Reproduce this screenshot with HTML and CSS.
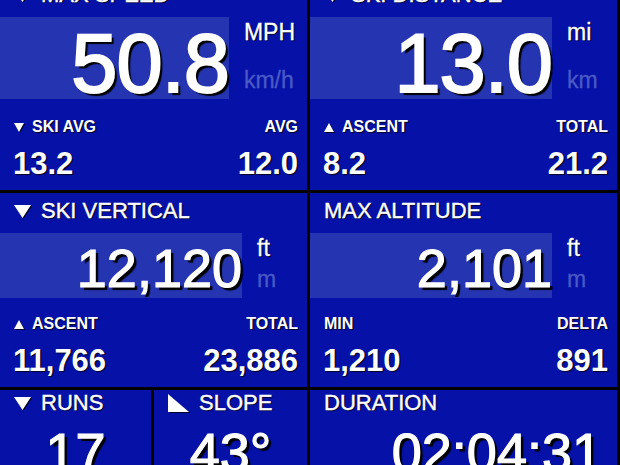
FILE: index.html
```html
<!DOCTYPE html>
<html lang="en">
  <head>
    <meta charset="UTF-8" />
    <meta name="viewport" content="width=device-width, initial-scale=1.0" />
    <title>Ski Stats</title>
    <link rel="stylesheet" href="styles.css">
  </head>
  <body>
    <div class="dash">
      <div class="panel panel-big">
        <div class="title">
          <svg class="tri" viewBox="0 0 17 13"><path d="M0 0H17L8.5 13Z" /></svg>
          <span>MAX SPEED</span>
        </div>
        <div class="hero">
          <div class="hero-value">50.8</div>
          <div class="units">
            <span>MPH</span>
            <span class="dim">km/h</span>
          </div>
        </div>
        <div class="sub-labels">
          <span><svg class="tri-sm" viewBox="0 0 10 9"><path d="M0 0H10L5 9Z" /></svg>SKI AVG</span>
          <span>AVG</span>
        </div>
        <div class="sub-values">
          <span>13.2</span>
          <span>12.0</span>
        </div>
      </div>

      <div class="panel panel-big">
        <div class="title">
          <svg class="tri" viewBox="0 0 17 13"><path d="M0 0H17L8.5 13Z" /></svg>
          <span>SKI DISTANCE</span>
        </div>
        <div class="hero">
          <div class="hero-value">13.0</div>
          <div class="units">
            <span>mi</span>
            <span class="dim">km</span>
          </div>
        </div>
        <div class="sub-labels">
          <span><svg class="tri-sm" viewBox="0 0 10 9"><path d="M5 0L10 9H0Z" /></svg>ASCENT</span>
          <span>TOTAL</span>
        </div>
        <div class="sub-values">
          <span>8.2</span>
          <span>21.2</span>
        </div>
      </div>

      <div class="panel">
        <div class="title">
          <svg class="tri" viewBox="0 0 17 13"><path d="M0 0H17L8.5 13Z" /></svg>
          <span>SKI VERTICAL</span>
        </div>
        <div class="hero">
          <div class="hero-value">12,120</div>
          <div class="units">
            <span>ft</span>
            <span class="dim">m</span>
          </div>
        </div>
        <div class="sub-labels">
          <span><svg class="tri-sm" viewBox="0 0 10 9"><path d="M5 0L10 9H0Z" /></svg>ASCENT</span>
          <span>TOTAL</span>
        </div>
        <div class="sub-values">
          <span>11,766</span>
          <span>23,886</span>
        </div>
      </div>

      <div class="panel">
        <div class="title">
          <span>MAX ALTITUDE</span>
        </div>
        <div class="hero">
          <div class="hero-value">2,101</div>
          <div class="units">
            <span>ft</span>
            <span class="dim">m</span>
          </div>
        </div>
        <div class="sub-labels">
          <span>MIN</span>
          <span>DELTA</span>
        </div>
        <div class="sub-values">
          <span>1,210</span>
          <span>891</span>
        </div>
      </div>

      <div class="pair">
        <div class="panel panel-small">
          <div class="title">
            <svg class="tri" viewBox="0 0 17 13"><path d="M0 0H17L8.5 13Z" /></svg>
            <span>RUNS</span>
          </div>
          <div class="big-value center">17</div>
        </div>
        <div class="panel panel-small">
          <div class="title">
            <svg class="slope" viewBox="0 0 21 18"><path d="M0 0L21 18H0Z" /></svg>
            <span>SLOPE</span>
          </div>
          <div class="big-value center">43°</div>
        </div>
      </div>

      <div class="panel panel-small">
        <div class="title">
          <span>DURATION</span>
        </div>
        <div class="big-value right">02:04:31</div>
      </div>
    </div>
  </body>
</html>
```

FILE: styles.css
```css
body {
  margin: 0;
  height: 465px;
  overflow: hidden;
  background-color: #000;
  font-family: "Liberation Sans", Arial, sans-serif;
  color: #fff;
}
.dash {
  display: grid;
  grid-template-columns: 307px 307px;
  grid-template-rows: 213px 194px 120px;
  gap: 3px;
  margin-top: -23px;
}
.pair {
  display: grid;
  grid-template-columns: 151px 153px;
  gap: 3px;
}
.panel {
  background-color: #0611a8;
  display: flex;
  flex-direction: column;
  text-shadow: 1px 1px 1px rgba(0, 0, 0, 0.8);
}
.title {
  display: flex;
  align-items: center;
  gap: 10px;
  height: 26px;
  padding: 5px 14px 0;
  font-size: 22px;
  line-height: 26px;
  -webkit-text-stroke: 0.4px #fff;
}
.tri {
  width: 17px;
  height: 13px;
  fill: #fff;
  filter: drop-shadow(1px 1px 0 rgba(0, 0, 0, 0.8));
}
.tri-sm {
  width: 10px;
  height: 9px;
  margin-right: 8px;
  fill: #fff;
  filter: drop-shadow(1px 1px 0 rgba(0, 0, 0, 0.8));
}
.slope {
  width: 21px;
  height: 18px;
  fill: #fff;
  filter: drop-shadow(1px 1px 0 rgba(0, 0, 0, 0.8));
}
.hero {
  display: flex;
  height: 65px;
  margin-top: 9px;
}
.hero-value {
  flex: 1;
  background-color: #2534b0;
  text-align: right;
  box-sizing: border-box;
  padding-top: 8px;
  font-size: 54px;
  line-height: 54px;
  text-shadow: 3px 3px 1px #000;
  -webkit-text-stroke: 1.2px #fff;
}
.units {
  display: flex;
  flex-direction: column;
  justify-content: space-between;
  min-width: 38px;
  padding: 4px 12px 7px 15px;
  font-size: 23px;
  line-height: 23px;
  -webkit-text-stroke: 0.3px #fff;
}
.units .dim {
  color: #4a5ac4;
  text-shadow: none;
  -webkit-text-stroke: 0.3px #4a5ac4;
}
.sub-labels {
  display: flex;
  justify-content: space-between;
  align-items: center;
  margin-top: 16px;
  padding: 0 9px 0 14px;
  font-size: 16px;
  font-weight: bold;
  line-height: 20px;
}
.sub-labels span {
  display: flex;
  align-items: center;
}
.sub-values {
  display: flex;
  justify-content: space-between;
  margin-top: 10px;
  padding: 0 9px 0 13px;
  font-size: 31px;
  font-weight: bold;
  line-height: 34px;
}
.panel-big .hero {
  height: 82px;
}
.panel-big .hero-value {
  padding-top: 5px;
  font-size: 83px;
  line-height: 83px;
  letter-spacing: -1px;
  -webkit-text-stroke: 2px #fff;
}
.panel-big .sub-labels {
  margin-top: 18px;
}
.panel-small .title {
  padding-top: 0;
}
.big-value {
  margin-top: 9px;
  font-size: 54px;
  line-height: 54px;
  text-shadow: 3px 3px 1px #000;
  -webkit-text-stroke: 1.2px #fff;
}
.center {
  text-align: center;
}
.right {
  text-align: right;
  padding-right: 15px;
}
```
